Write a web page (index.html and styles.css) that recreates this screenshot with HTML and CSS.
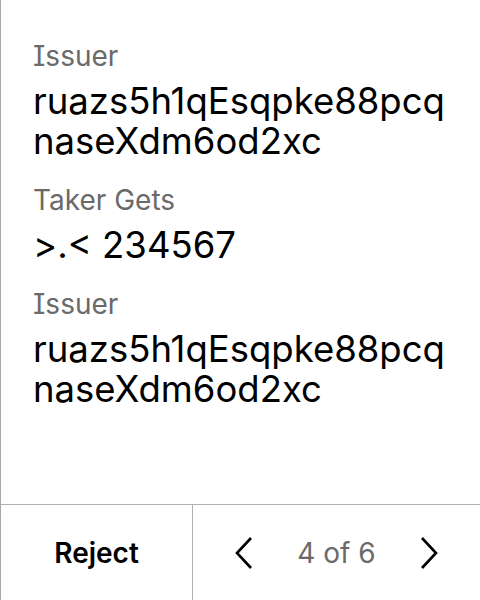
FILE: index.html
```html
<!DOCTYPE html>
<html>
<head>
<meta charset="utf-8">
<link rel="stylesheet" href="styles.css">
</head>
<body>
<div class="screen">
  <div class="content">
    <div class="field">
      <div class="label">Issuer</div>
      <div class="value">ruazs5h1qEsqpke88pcq<br>naseXdm6od2xc</div>
    </div>
    <div class="field">
      <div class="label">Taker Gets</div>
      <div class="value">&gt;.&lt; 234567</div>
    </div>
    <div class="field">
      <div class="label">Issuer</div>
      <div class="value">ruazs5h1qEsqpke88pcq<br>naseXdm6od2xc</div>
    </div>
  </div>
  <div class="footer">
    <div class="reject">Reject</div>
    <div class="nav">
      <svg class="chev" width="20" height="34" viewBox="0 0 20 34"><path d="M17 2 L3 17 L17 32" fill="none" stroke="#000" stroke-width="2.6"/></svg>
      <span class="page">4 of 6</span>
      <svg class="chev" width="20" height="34" viewBox="0 0 20 34"><path d="M3 2 L17 17 L3 32" fill="none" stroke="#000" stroke-width="2.6"/></svg>
    </div>
  </div>
</div>
</body>
</html>
```
FILE: styles.css
```css
html, body { margin: 0; padding: 0; background: #fff; }
body { font-family: Inter, "Noto Sans", sans-serif; color: #000; font-feature-settings: "cv08"; }
.screen {
  width: 480px; height: 600px; box-sizing: border-box;
  border-left: 1px solid #a8a8a8;
  display: flex; flex-direction: column;
}
.content { flex: 1; padding: 38px 0 0 32px; display: flex; flex-direction: column; gap: 21px; }
.label { font-size: 28px; line-height: 36px; color: #6a6a6a; }
.value { font-size: 36.5px; line-height: 40px; margin-top: 7px; }
.footer {
  height: 95px; border-top: 1px solid #b0b0b0;
  display: flex;
}
.reject {
  width: 191px; border-right: 1px solid #b0b0b0;
  display: flex; align-items: center; justify-content: center;
  font-size: 28px; font-weight: 600;
}
.nav { flex: 1; display: flex; align-items: center; justify-content: space-between; padding: 0 41px 0 41px; }
.page { font-size: 28px; color: #6a6a6a; }
```
